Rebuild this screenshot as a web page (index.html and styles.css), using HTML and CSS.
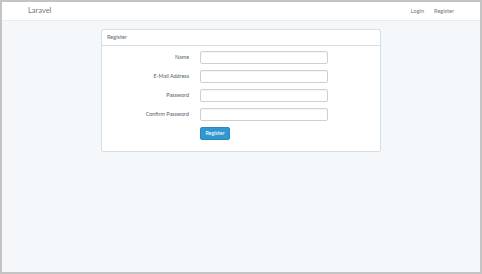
FILE: index.html
```html
<!DOCTYPE html>
<html lang="en">
<head>
<meta charset="utf-8">
<title>Laravel</title>
<link rel="stylesheet" href="styles.css">
</head>
<body>
<div class="frame">
  <nav class="navbar">
    <a class="brand" href="#">Laravel</a>
    <ul class="nav-links">
      <li><a href="#">Login</a></li>
      <li><a href="#">Register</a></li>
    </ul>
  </nav>
  <main class="content">
    <section class="card">
      <div class="card-header">Register</div>
      <form class="card-body">
        <div class="form-row">
          <label class="form-label" for="name">Name</label>
          <input class="form-input" id="name" type="text">
        </div>
        <div class="form-row">
          <label class="form-label" for="email">E-Mail Address</label>
          <input class="form-input" id="email" type="email">
        </div>
        <div class="form-row">
          <label class="form-label" for="password">Password</label>
          <input class="form-input" id="password" type="password">
        </div>
        <div class="form-row">
          <label class="form-label" for="password-confirm">Confirm Password</label>
          <input class="form-input" id="password-confirm" type="password">
        </div>
        <div class="form-row">
          <span></span>
          <div class="btn-wrap"><button class="btn" type="button">Register</button></div>
        </div>
      </form>
    </section>
  </main>
</div>
</body>
</html>
```

FILE: styles.css
```css
* { box-sizing: border-box; }
html, body { margin: 0; padding: 0; }
body {
  font-family: Lato, "Open Sans", sans-serif;
  font-size: 6px;
  line-height: 1.2;
  color: #636b6f;
}
.frame {
  width: 482px;
  height: 274px;
  border: 2px solid #c4c4c4;
  background: #f5f8fa;
  overflow: hidden;
}
.navbar {
  height: 19px;
  background: #fff;
  border-bottom: 1px solid #e6ecf0;
  display: flex;
  align-items: center;
  justify-content: space-between;
  padding: 0 26px;
}
.brand {
  font-size: 7.5px;
  line-height: 1;
  color: #777;
  text-decoration: none;
}
.nav-links {
  list-style: none;
  margin: 0;
  padding: 0;
  display: flex;
  align-items: center;
  gap: 10px;
}
.nav-links li {
  line-height: 1;
}
.nav-links a {
  font-size: 5.6px;
  color: #777;
  text-decoration: none;
}
.content {
  padding-top: 8px;
  display: flex;
  justify-content: center;
}
.card {
  width: 280px;
  background: #fff;
  border: 1px solid #d3e0e9;
  border-radius: 2px;
}
.card-header {
  height: 16px;
  padding: 0 5px;
  display: flex;
  align-items: center;
  font-size: 5.6px;
  color: #636b6f;
  border-bottom: 1px solid #d3e0e9;
}
.card-body {
  padding: 5px 0 11px 0;
  display: flex;
  flex-direction: column;
  gap: 5.6px;
}
.form-row {
  display: grid;
  grid-template-columns: 87px 128px;
  column-gap: 11px;
  align-items: center;
}
.form-label {
  text-align: right;
  font-size: 5.4px;
  font-weight: 500;
  color: #636b6f;
}
.form-input {
  display: block;
  height: 13.4px;
  width: 128px;
  border: 1px solid #ccd0d2;
  border-radius: 2px;
  background: #fff;
  box-shadow: inset 0 1px 1px rgba(0,0,0,0.04);
  padding: 0;
  margin: 0;
}
.btn-wrap {
  display: flex;
}
.btn {
  display: block;
  height: 13.5px;
  width: 30px;
  padding: 0;
  border: 1px solid #2a88bd;
  border-radius: 2px;
  background: #3097d1;
  color: #fff;
  font-family: Lato, "Open Sans", sans-serif;
  font-size: 5.4px;
  line-height: 1;
}
```
